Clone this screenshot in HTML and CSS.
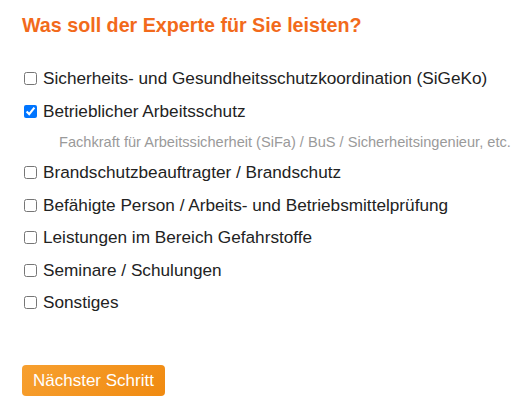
FILE: index.html
```html
<!DOCTYPE html>
<html lang="de">
<head>
  <meta charset="UTF-8">
  <title>Leistungen</title>
  <link rel="stylesheet" href="styles.css">
</head>
<body>

  <form class="step">
    <h2 class="step-title">Was soll der Experte für Sie leisten?</h2>

    <ul class="options">
      <li class="option">
        <label><input type="checkbox" name="leistung" value="sigeko"> Sicherheits- und Gesundheitsschutzkoordination (SiGeKo)</label>
      </li>
      <li class="option">
        <label><input type="checkbox" name="leistung" value="arbeitsschutz" checked> Betrieblicher Arbeitsschutz</label>
        <div class="option-hint">Fachkraft für Arbeitssicherheit (SiFa) / BuS / Sicherheitsingenieur, etc.</div>
      </li>
      <li class="option">
        <label><input type="checkbox" name="leistung" value="brandschutz"> Brandschutzbeauftragter / Brandschutz</label>
      </li>
      <li class="option">
        <label><input type="checkbox" name="leistung" value="befaehigt"> Befähigte Person / Arbeits- und Betriebsmittelprüfung</label>
      </li>
      <li class="option">
        <label><input type="checkbox" name="leistung" value="gefahrstoffe"> Leistungen im Bereich Gefahrstoffe</label>
      </li>
      <li class="option">
        <label><input type="checkbox" name="leistung" value="seminare"> Seminare / Schulungen</label>
      </li>
      <li class="option">
        <label><input type="checkbox" name="leistung" value="sonstiges"> Sonstiges</label>
      </li>
    </ul>

    <button type="button" class="next-btn">Nächster Schritt</button>
  </form>

</body>
</html>
```

FILE: styles.css
```css
* {
  box-sizing: border-box;
}

body {
  margin: 0;
  padding: 0;
  background: #fff;
  font-family: 'Liberation Sans', Arial, sans-serif;
  color: #222;
}

.step {
  padding: 14px 10px 14px 22px;
}

.step-title {
  margin: 0 0 32px;
  font-size: 19.7px;
  line-height: 23px;
  font-weight: bold;
  color: #f26a1b;
}

.options {
  list-style: none;
  margin: 0 0 53px;
  padding: 0;
  display: flex;
  flex-direction: column;
  gap: 13.5px;
}

.option label {
  display: flex;
  align-items: center;
  gap: 6px;
  font-size: 17.2px;
  line-height: 19px;
  white-space: nowrap;
}

.option input {
  margin: 0 0 0 2px;
  width: 13px;
  height: 13px;
}

.option-hint {
  margin: 13px 0 -1px 37px;
  font-size: 14.6px;
  line-height: 17px;
  color: #9a9a9a;
  white-space: nowrap;
}

.next-btn {
  padding: 6px 11px;
  font-family: inherit;
  font-size: 17px;
  line-height: 19px;
  color: #fff;
  background: linear-gradient(135deg, #f7a030, #f08a10);
  border: none;
  border-radius: 4px;
  cursor: pointer;
}
```
